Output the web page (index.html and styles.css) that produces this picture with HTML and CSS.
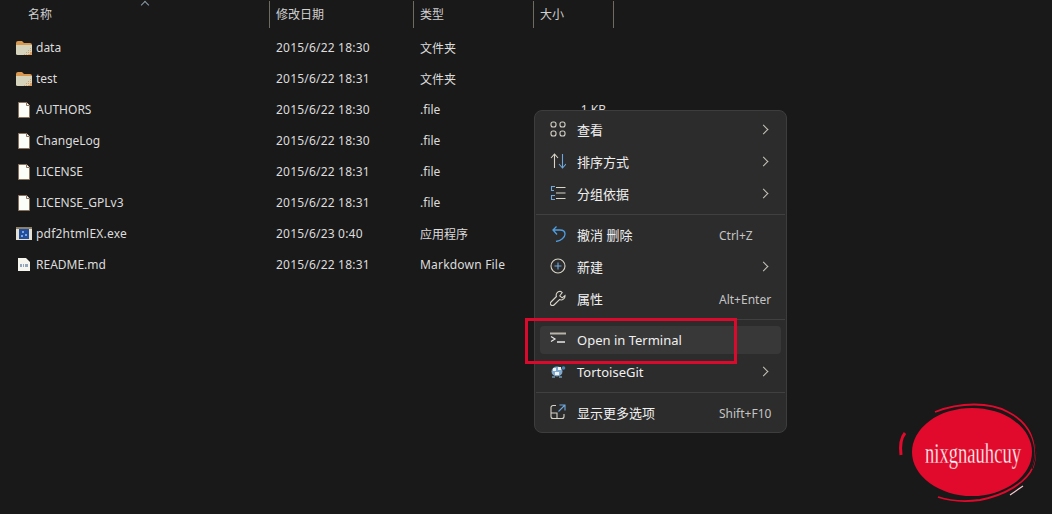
FILE: index.html
```html
<!DOCTYPE html>
<html lang="en">
<head>
    <meta charset="UTF-8">
    <title>Explorer context menu</title>
    <link rel="stylesheet" href="styles.css">
</head>
<body>

    <svg class="sprites" width="0" height="0">
        <symbol id="folder" viewBox="0 0 16 14">
            <path d="M0 2q0-2 2-2h4l2 2h6q2 0 2 2v1H0z" fill="#d9984f"/>
            <path d="M0 4h16v8.500q0 1.500-1.500 1.500h-13Q0 14 0 12.500z" fill="#d6d3bd"/>
            <path d="M8 13h1v1H8zM10 13h1v1h-1zM12 13h4v1h-4zM10 11h1v1h-1zM12 11h1v1h-1zM14 11h2v2h-2zM12 9h1v1h-1zM14 9h1v1h-1zM14 7h1v1h-1z" fill="#dd9f62"/>
        </symbol>
        <symbol id="file" viewBox="0 0 12 16">
            <path d="M.5.500h8l3 3v12H.5z" fill="#fbfdf9" stroke="#8a725c"/>
            <path d="M8.500.500v3h3" fill="#fff" stroke="#8a725c"/>
        </symbol>
        <symbol id="exe" viewBox="0 0 16 13">
            <rect width="16" height="13" fill="#e4e0d2"/>
            <rect x="0" y="0" width="16" height="2" fill="#8c8068"/>
            <rect x="3" y="2" width="10" height="10" fill="#1f4f9e"/>
            <path d="M6 4h2v2H6zM9 7h2v2H9zM5 8h2v2H5z" fill="#7fa6dc"/>
        </symbol>
        <symbol id="md" viewBox="0 0 12 13">
            <path d="M0 0h8l4 4v9H0z" fill="#f6f6ee"/>
            <path d="M2 6h2v3H2zM5 6h1v3H5zM7 6h3v3H7z" fill="#8fa6bd"/>
        </symbol>
    </svg>

    <div class="list-header">
        <div class="col-head col-name">名称<span class="sort-mark"></span></div>
        <div class="col-head">修改日期</div>
        <div class="col-head">类型</div>
        <div class="col-head">大小</div>
    </div>

    <div class="file-list">
        <div class="file-row">
            <div class="file-name"><span class="file-icon"><svg class="ic-folder"><use href="#folder"/></svg></span>data</div>
            <div class="file-meta">2015/6/22 18:30</div><div>文件夹</div><div class="file-size"></div>
        </div>
        <div class="file-row">
            <div class="file-name"><span class="file-icon"><svg class="ic-folder"><use href="#folder"/></svg></span>test</div>
            <div class="file-meta">2015/6/22 18:31</div><div>文件夹</div><div class="file-size"></div>
        </div>
        <div class="file-row">
            <div class="file-name"><span class="file-icon"><svg class="ic-file"><use href="#file"/></svg></span>AUTHORS</div>
            <div class="file-meta">2015/6/22 18:30</div><div>.file</div><div class="file-size">1 KB</div>
        </div>
        <div class="file-row">
            <div class="file-name"><span class="file-icon"><svg class="ic-file"><use href="#file"/></svg></span>ChangeLog</div>
            <div class="file-meta">2015/6/22 18:30</div><div>.file</div><div class="file-size"></div>
        </div>
        <div class="file-row">
            <div class="file-name"><span class="file-icon"><svg class="ic-file"><use href="#file"/></svg></span>LICENSE</div>
            <div class="file-meta">2015/6/22 18:31</div><div>.file</div><div class="file-size"></div>
        </div>
        <div class="file-row">
            <div class="file-name"><span class="file-icon"><svg class="ic-file"><use href="#file"/></svg></span>LICENSE_GPLv3</div>
            <div class="file-meta">2015/6/22 18:31</div><div>.file</div><div class="file-size"></div>
        </div>
        <div class="file-row">
            <div class="file-name file-meta"><span class="file-icon"><svg class="ic-exe"><use href="#exe"/></svg></span>pdf2htmlEX.exe</div>
            <div class="file-meta">2015/6/23 0:40</div><div>应用程序</div><div class="file-size"></div>
        </div>
        <div class="file-row">
            <div class="file-name"><span class="file-icon"><svg class="ic-md"><use href="#md"/></svg></span>README.md</div>
            <div class="file-meta">2015/6/22 18:31</div><div class="file-meta">Markdown File</div><div class="file-size"></div>
        </div>
    </div>

    <!-- context menu -->
    <div class="menu">
        <div class="menu-item">
            <svg class="menu-icon" viewBox="0 0 16 16" fill="none" stroke="#d8d4c8" stroke-width="1.100"><rect x="1" y="1" width="5" height="5" rx="2"/><rect x="10" y="1" width="5" height="5" rx="2"/><rect x="1" y="10" width="5" height="5" rx="2"/><rect x="10" y="10" width="5" height="5" rx="2"/></svg>
            <span class="menu-label">查看</span><span class="chevron"></span>
        </div>
        <div class="menu-item">
            <svg class="menu-icon" viewBox="0 0 16 16" fill="none" stroke-width="1.100"><path d="M1 5l3.500-4L8 5M4.500 1v14" stroke="#d8d4c8"/><path d="M9 11l3.500 4 3.500-4M12.500 1v14" stroke="#6fa8dc"/></svg>
            <span class="menu-label">排序方式</span><span class="chevron"></span>
        </div>
        <div class="menu-item">
            <svg class="menu-icon" viewBox="0 0 16 16" fill="none" stroke-width="1.100"><path d="M5 1.500H1.500v4H4M5 10.500H1.500v4H5" stroke="#6fa8dc"/><path d="M6 2.500h9.500M6 8h9.500M6 13.500h9.500" stroke="#d8d4c8"/></svg>
            <span class="menu-label">分组依据</span><span class="chevron"></span>
        </div>
        <div class="menu-sep"></div>
        <div class="menu-item">
            <svg class="menu-icon" viewBox="0 0 16 16" fill="none" stroke="#4f9fe0" stroke-width="1.300"><path d="M6.500.500L3 4l4 4.500M3 4h7c3 0 5 1.500 5 4 0 3.500-4 6.500-9 7.500"/></svg>
            <span class="menu-label">撤消 删除</span><span class="shortcut">Ctrl+Z</span>
        </div>
        <div class="menu-item">
            <svg class="menu-icon" viewBox="0 0 16 16" fill="none" stroke-width="1.100"><circle cx="8" cy="8" r="7" stroke="#d8d4c8"/><path d="M8 4.500v7M4.500 8h7" stroke="#6fa8dc"/></svg>
            <span class="menu-label">新建</span><span class="chevron"></span>
        </div>
        <div class="menu-item">
            <svg class="menu-icon" viewBox="0 0 16 16" fill="none" stroke="#d8d4c8" stroke-width="1.100"><path d="M10 1.200a4 4 0 0 0-3.600 5.300L1 12a2 2 0 0 0 3 3l5.500-5.400A4 4 0 0 0 15 5.500l-2.800 2.300-2.400-2L12.200 2.500A4 4 0 0 0 10 1.200z"/></svg>
            <span class="menu-label">属性</span><span class="shortcut">Alt+Enter</span>
        </div>
        <div class="menu-sep"></div>
        <div class="menu-item menu-item-active">
            <svg class="menu-icon" viewBox="0 0 16 16" fill="none" stroke-width="1.200"><path d="M0 2.500h16" stroke="#b8b4a8" stroke-width="2"/><path d="M1 5.500L5 8l-4 2.500" stroke="#e8e8e8"/><path d="M7 11h8" stroke="#e8e8e8" stroke-width="1.500"/></svg>
            <span class="menu-label menu-label-latin">Open in Terminal</span>
        </div>
        <div class="menu-item">
            <svg class="menu-icon" viewBox="0 0 16 16"><ellipse cx="7" cy="8.500" rx="5.500" ry="5" fill="#7fa9cc"/><path d="M3 5h3v3H3zM8 4h3v3H8zM5 9h4v3H5z" fill="#eef2f2"/><path d="M2 13h3v2H2zM9 13h3v2H9z" fill="#5d7f92"/><circle cx="13.500" cy="5" r="1.800" fill="#4f86b8"/></svg>
            <span class="menu-label menu-label-latin">TortoiseGit</span><span class="chevron"></span>
        </div>
        <div class="menu-sep"></div>
        <div class="menu-item">
            <svg class="menu-icon" viewBox="0 0 16 16" fill="none" stroke-width="1.100"><path d="M6 1.500H3A2 2 0 0 0 1 3.500v9a2 2 0 0 0 2 2h9a2 2 0 0 0 2-2V10M1 9h6v5.500" stroke="#d8d4c8"/><path d="M9.500 1h5.500v5.500M15 1L8.500 7.500" stroke="#6fa8dc"/></svg>
            <span class="menu-label">显示更多选项</span><span class="shortcut">Shift+F10</span>
        </div>
    </div>

    <div class="callout"></div>

    <svg class="stamp" viewBox="0 0 162 119" width="162" height="119">
        <ellipse cx="82" cy="57" rx="60" ry="44" fill="#e20a2c"/>
        <path d="M45 17C70 7 100 7 118 17 140 28 150 50 143 72 136 88 115 100 90 105 75 107 60 106 48 102" fill="none" stroke="#e20a2c" stroke-width="1.800"/>
        <path d="M126 18C144 32 150 54 142 74" fill="none" stroke="#1a1a1a" stroke-width="1.200"/>
        <path d="M15 38C10 44 10 52 11 60" fill="none" stroke="#e20a2c" stroke-width="3"/>
        <path d="M120 100l13-9" stroke="#f3c9cf" stroke-width="1.200"/>
        <text class="stamp-text" transform="translate(35 68) scale(0.62 1)">nixgnauhcuy</text>
    </svg>

</body>
</html>
```

FILE: styles.css
```css
* {
    margin: 0;
    padding: 0;
    box-sizing: border-box;
}

body {
    position: relative;
    height: 100vh;
    overflow: hidden;
    background-color: #191919;
    color: #dcdcdc;
    font-family: 'Noto Sans', 'Noto Sans CJK SC', sans-serif;
    font-size: 12px;
}

.sprites {
    position: absolute;
}

.list-header {
    display: grid;
    grid-template-columns: 270px 144px 120px 80px;
    height: 32px;
    padding-top: 1px;
}

.col-head {
    position: relative;
    height: 27px;
    padding-left: 6px;
    line-height: 27px;
    border-right: 1px solid #6f6a62;
    color: #cfcfcf;
}

.col-name {
    padding-left: 28px;
}

.sort-mark {
    position: absolute;
    left: 142px;
    top: 1px;
    width: 6px;
    height: 6px;
    border-left: 1px solid #8a9aa8;
    border-top: 1px solid #8a9aa8;
    transform: rotate(45deg);
}

.file-row {
    display: grid;
    grid-template-columns: 276px 144px 120px 66px;
    align-items: center;
    height: 31px;
}

.file-name {
    display: flex;
    align-items: center;
    padding-left: 16px;
}

.file-meta {
    letter-spacing: 0.2px;
}

.file-icon {
    display: flex;
    justify-content: center;
    width: 16px;
    margin-right: 4px;
}

.ic-folder {
    width: 16px;
    height: 14px;
}

.ic-file {
    width: 12px;
    height: 16px;
}

.ic-exe {
    width: 16px;
    height: 13px;
}

.ic-md {
    width: 12px;
    height: 13px;
}

.file-size {
    text-align: right;
}

.menu {
    position: absolute;
    left: 534px;
    top: 110px;
    width: 253px;
    height: 323px;
    padding: 3px 0;
    background-color: #2c2c2c;
    border: 1px solid #3d3d3d;
    border-radius: 8px;
    color: #f0f0f0;
    font-size: 13px;
}

.menu-item {
    position: relative;
    display: flex;
    align-items: center;
    height: 32px;
    padding: 0 16px 0 15px;
}

.menu-item-active::before {
    content: "";
    position: absolute;
    left: 5px;
    right: 5px;
    top: 2px;
    bottom: 2px;
    background-color: #383838;
    border-radius: 4px;
}

.menu-icon {
    position: relative;
    top: -1px;
    width: 16px;
    height: 16px;
    flex-shrink: 0;
}

.menu-label {
    position: relative;
    top: -1px;
    flex: 1;
    margin-left: 11px;
}

.menu-label-latin {
    top: 0;
}

.shortcut {
    width: 51px;
    font-size: 12px;
    color: #c4c4c4;
}

.chevron {
    position: relative;
    top: -1px;
    width: 7px;
    height: 7px;
    margin-right: 3px;
    border-top: 1px solid #c8c4b8;
    border-right: 1px solid #c8c4b8;
    transform: rotate(45deg);
}

.menu-sep {
    height: 1px;
    margin: 4px 1px;
    background-color: #404040;
}

.callout {
    position: absolute;
    left: 525px;
    top: 318px;
    width: 212px;
    height: 46px;
    border: 3px solid #db0a2d;
}

.stamp {
    position: absolute;
    left: 890px;
    top: 395px;
}

.stamp-text {
    fill: #fff;
    stroke: #e20a2c;
    stroke-width: 0.4px;
    font-family: 'Liberation Serif', serif;
    font-size: 30px;
}
```
